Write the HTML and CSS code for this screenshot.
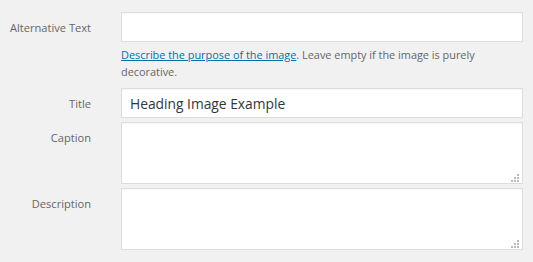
FILE: index.html
```html
<!DOCTYPE html>
<html lang="en">
<head>
    <meta charset="UTF-8">
    <meta name="viewport" content="width=device-width, initial-scale=1.0">
    <title>Attachment Details</title>
    <link rel="stylesheet" href="styles.css">
</head>
<body>
    <div class="settings">
        <label class="setting">
            <span class="name">Alternative Text</span>
            <div class="field">
                <input type="text" class="text-input">
                <p class="description"><a href="#">Describe the purpose of the image</a>. Leave empty if the image is purely decorative.</p>
            </div>
        </label>

        <label class="setting">
            <span class="name">Title</span>
            <div class="field">
                <input type="text" class="text-input" value="Heading Image Example">
            </div>
        </label>

        <label class="setting">
            <span class="name">Caption</span>
            <div class="field grip-wrap">
                <textarea class="text-area"></textarea>
                <svg class="grip" width="8" height="8" viewBox="0 0 8 8">
                    <rect x="6" y="0" width="2" height="2"/>
                    <rect x="3" y="3" width="2" height="2"/>
                    <rect x="6" y="3" width="2" height="2"/>
                    <rect x="0" y="6" width="2" height="2"/>
                    <rect x="3" y="6" width="2" height="2"/>
                    <rect x="6" y="6" width="2" height="2"/>
                </svg>
            </div>
        </label>

        <label class="setting">
            <span class="name">Description</span>
            <div class="field grip-wrap">
                <textarea class="text-area"></textarea>
                <svg class="grip" width="8" height="8" viewBox="0 0 8 8">
                    <rect x="6" y="0" width="2" height="2"/>
                    <rect x="3" y="3" width="2" height="2"/>
                    <rect x="6" y="3" width="2" height="2"/>
                    <rect x="0" y="6" width="2" height="2"/>
                    <rect x="3" y="6" width="2" height="2"/>
                    <rect x="6" y="6" width="2" height="2"/>
                </svg>
            </div>
        </label>
    </div>
</body>
</html>
```

FILE: styles.css
```css
body {
    margin: 0;
    background: #f1f1f1;
    font-family: "Open Sans", "Noto Sans", sans-serif;
    font-size: 11.1px;
    color: #666;
}
.settings {
    padding: 12px 10px 12px 0;
}
.setting {
    display: grid;
    grid-template-columns: 91px 402px;
    column-gap: 30px;
    margin-bottom: 4px;
}
.name {
    text-align: right;
    padding-top: 8px;
    line-height: 16px;
}
.field {
    display: flex;
    flex-direction: column;
}
.grip-wrap {
    position: relative;
}
.text-input,
.text-area {
    box-sizing: border-box;
    width: 402px;
    margin: 0;
    border: 1px solid #ddd;
    background: #fff;
    font-family: "Open Sans", "Noto Sans", sans-serif;
    color: #32373c;
    outline: none;
    border-radius: 0;
    box-shadow: inset 0 1px 2px rgba(0, 0, 0, 0.04);
}
.text-input {
    height: 30px;
    padding: 0 8px;
    font-size: 13.8px;
}
.text-area {
    height: 62px;
    padding: 4px 8px;
    resize: none;
    display: block;
}
.grip {
    position: absolute;
    right: 4px;
    bottom: 2px;
    fill: #bbb;
}
.description {
    margin: 4px 0 4px;
    font-size: 10.9px;
    line-height: 17px;
}
.description a {
    color: #0073aa;
}
```
